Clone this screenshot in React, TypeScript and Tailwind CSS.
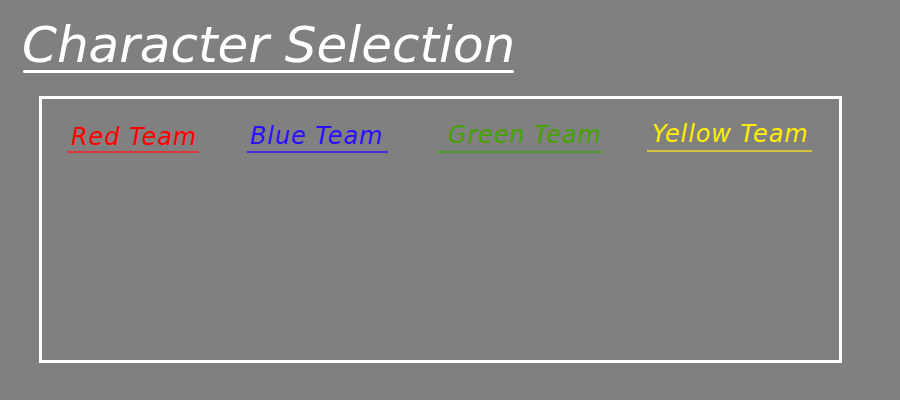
export default function App() {
  const font = { fontFamily: '"DejaVu Sans", Verdana, sans-serif' };
  return (
    <div className="w-[900px] h-[400px] bg-[#808080] overflow-hidden" style={font}>
      <div className="flex flex-col">
        <div className="mt-[20px] ml-[22px] text-[50px] leading-none italic text-white whitespace-nowrap">
          Character Selection
        </div>
        <div className="ml-[23px] w-[491px] h-[3px] bg-white rounded-full" />
        <div className="mt-[23px] ml-[39px] w-[803px] h-[267px] border-[3px] border-white">
          <div className="flex items-start">
            <div className="ml-[25px] mt-[26px] flex flex-col">
              <div className="pl-[4px] text-[24px] leading-none italic tracking-[0.9px] text-[#ff0000] whitespace-nowrap">Red Team</div>
              <div className="mt-[2px] w-[132px] h-[2px] bg-[#dc3636]" />
            </div>
            <div className="ml-[48px] mt-[25px] flex flex-col">
              <div className="pl-[3px] text-[24px] leading-none italic tracking-[0.9px] text-[#2a0fff] whitespace-nowrap">Blue Team</div>
              <div className="mt-[3px] w-[141px] h-[2px] bg-[#4433dd]" />
            </div>
            <div className="ml-[48px] mt-[24px] flex flex-col">
              <div className="pl-[12px] text-[24px] leading-none italic tracking-[0.8px] text-[#46a000] whitespace-nowrap">Green Team</div>
              <div className="mt-[4px] w-[166px] h-[2px] bg-[#4f9a2c]" />
            </div>
            <div className="ml-[45px] mt-[23px] flex flex-col">
              <div className="pl-[5px] text-[24px] leading-none italic tracking-[0.9px] text-[#ffee00] whitespace-nowrap">Yellow Team</div>
              <div className="mt-[4px] w-[165px] h-[2px] bg-[#d2c23c]" />
            </div>
          </div>
        </div>
      </div>
    </div>
  );
}
